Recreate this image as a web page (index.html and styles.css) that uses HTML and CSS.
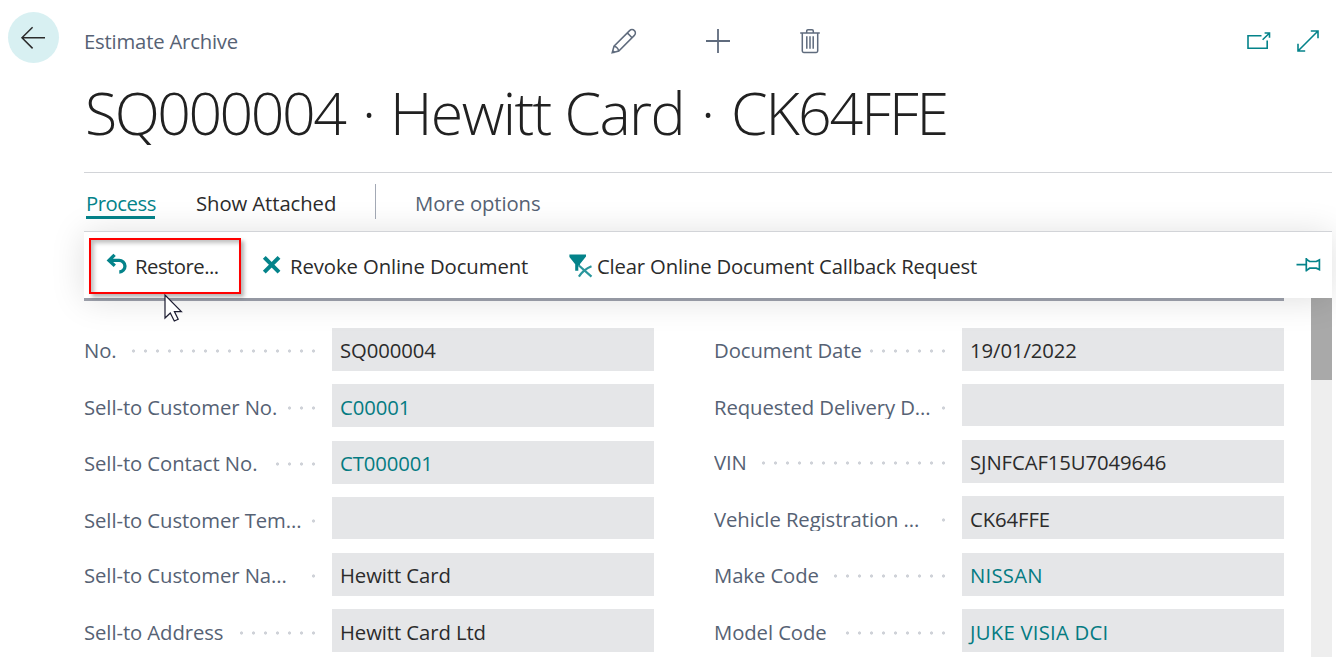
FILE: index.html
```
<!DOCTYPE html>
<html lang="en">
<head>
<meta charset="utf-8">
<title>Estimate Archive</title>
<link rel="stylesheet" href="styles.css">
</head>
<body>
<div class="page">
  <header class="topbar">
    <button class="back" aria-label="Back">
      <svg width="51" height="51" viewBox="0 0 51 51"><path d="M37 25.7H14M24.6 15.2 14 25.7 24.6 36.4" fill="none" stroke="#2b2b2b" stroke-width="1.5"/></svg>
    </button>
    <span class="crumb">Estimate Archive</span>
    <nav class="record-actions">
      <svg width="26" height="26" viewBox="0 0 26 26" fill="none" stroke="#5f6b7d" stroke-width="1.5"><path d="M1.2 24.8 3 18.2 18.6 2.6a3.3 3.3 0 0 1 4.8 4.8L7.8 23Z M3 18.2Q6.600 18.800 7.8 23 M16.3 4.9l4.8 4.8 M1.4 22.2l2.4 2.4"/></svg>
      <svg width="26" height="26" viewBox="0 0 26 26" fill="none" stroke="#5f6b7d" stroke-width="1.8"><path d="M13 1v24M1 13h24"/></svg>
      <svg width="22" height="26" viewBox="0 0 22 26" fill="none" stroke="#5f6b7d" stroke-width="1.5"><path d="M1.2 4.9h19.6M3.3 5v18a1.4 1.4 0 0 0 1.4 1.4h12.6a1.4 1.4 0 0 0 1.4-1.4V5M7.7 4.6V3a1.2 1.2 0 0 1 1.2-1.2h4.2A1.2 1.2 0 0 1 14.3 3v1.6M7.8 8.3v12.4M11 8.3v12.4M14.2 8.3v12.4"/></svg>
    </nav>
    <nav class="window-actions">
      <svg width="26" height="20" viewBox="0 0 26 20" fill="none" stroke="#04838a" stroke-width="1.6"><path d="M15.5 4.8H2v12.4h19.2V9.5M16.6 8.8l6.2-6M18.6 2h4.9v4.7"/></svg>
      <svg width="24" height="24" viewBox="0 0 24 24" fill="none" stroke="#04838a" stroke-width="1.6"><path d="M2 22 22 2M14.8 2H22v7.2M2 14.8V22h7.2"/></svg>
    </nav>
  </header>

  <h1 class="title"><span class="t-no">SQ000004</span><span class="t-dot">·</span><span class="t-name">Hewitt Card</span><span class="t-dot second">·</span><span class="t-reg">CK64FFE</span></h1>

  <nav class="tabs">
    <a class="tab active">Process</a>
    <a class="tab attached">Show Attached</a>
    <a class="tab more">More options</a>
  </nav>

  <div class="actions">
    <div class="action highlight">
      <svg width="24" height="24" viewBox="0 0 24 24"><path d="M9.6 1.8 4 7.4l5.8 5.4M4.5 7.4H14a5.800 5.800 0 0 1 .3 11.600" fill="none" stroke="#04838a" stroke-width="3.3"/></svg>
      <span>Restore...</span>
      <svg class="cursor" width="20" height="29" viewBox="0 0 20 29"><path d="M1 1v23l5.3-5 4 8 3.9-1.8-3.8-7.6h7Z" fill="#fff" stroke="#1b1b30" stroke-width="1.2"/></svg>
    </div>
    <div class="action revoke">
      <svg width="20" height="20" viewBox="0 0 20 20"><path d="M2.3 2.4 17 17.2M17 2.4 2.3 17.2" stroke="#04838a" stroke-width="4"/></svg>
      <span>Revoke Online Document</span>
    </div>
    <div class="action clear">
      <svg width="24" height="24" viewBox="0 0 24 24"><path d="M.4.6H17v2L11 10v1.7H9.3v5H6.2v-6.500L.4 2.900Z" fill="#04838a"/><path d="M9.600 11.200 22.500 22.600M22.500 12.300Q14.500 15.500 9.900 22.700" fill="none" stroke="#2a969c" stroke-width="2.200"/></svg>
      <span>Clear Online Document Callback Request</span>
    </div>
    <svg class="pin" width="26" height="18" viewBox="0 0 26 18"><path d="M.5 8.700H10M10.300 2v13.600M10.300 3.200 13.600 5.500H20.300L23.400 3.900V13.600L20.300 12.200H13.600L10.300 14.600" fill="none" stroke="#04838a" stroke-width="1.700"/></svg>
  </div>

  <main class="content">
    <section class="fields">
      <div class="col left">
        <div class="field"><label>No.</label><i style="--n:16"></i><output>SQ000004</output></div>
        <div class="field"><label>Sell-to Customer No.</label><i style="--n:3"></i><output class="link">C00001</output></div>
        <div class="field"><label>Sell-to Contact No.</label><i style="--n:4"></i><output class="link">CT000001</output></div>
        <div class="field"><label>Sell-to Customer Tem...</label><i style="--n:1"></i><output></output></div>
        <div class="field"><label>Sell-to Customer Na...</label><i style="--n:1"></i><output>Hewitt Card</output></div>
        <div class="field"><label>Sell-to Address</label><i style="--n:7"></i><output>Hewitt Card Ltd</output></div>
      </div>
      <div class="col right">
        <div class="field"><label>Document Date</label><i style="--n:7"></i><output>19/01/2022</output></div>
        <div class="field"><label>Requested Delivery D...</label><i style="--n:1"></i><output></output></div>
        <div class="field"><label>VIN</label><i style="--n:16"></i><output>SJNFCAF15U7049646</output></div>
        <div class="field"><label>Vehicle Registration ...</label><i style="--n:1"></i><output>CK64FFE</output></div>
        <div class="field"><label>Make Code</label><i style="--n:10"></i><output class="link wide">NISSAN</output></div>
        <div class="field"><label>Model Code</label><i style="--n:9"></i><output class="link wide">JUKE VISIA DCI</output></div>
      </div>
    </section>
    <div class="scrollbar"><div class="thumb"></div></div>
  </main>
</div>
</body>
</html>
```
FILE: styles.css
```
* { box-sizing: border-box; }

html, body { margin: 0; height: 100%; overflow: hidden; }

body {
  background: #fff;
  color: #2b2b2b;
  font: 400 20.3px/28px "Open Sans", "Noto Sans", sans-serif;
  letter-spacing: -0.08px;
}

svg { display: block; flex: none; }

.page {
  height: 657px;
  width: 1332px;
  display: flex;
  flex-direction: column;
}

.topbar {
  flex: none;
  height: 75px;
  padding: 12px 12px 0 8px;
  display: flex;
  align-items: flex-start;
}

.back {
  width: 51px;
  height: 51px;
  padding: 0;
  border: 0;
  border-radius: 50%;
  background: #d8f0f2;
}

.crumb {
  width: 527px;
  margin: 15px 0 0 25px;
  color: #566274;
  letter-spacing: -0.2px;
}

.record-actions { display: flex; gap: 68px; margin-top: 16px; }

.window-actions {
  display: flex;
  align-items: center;
  gap: 24px;
  margin: 17px 0 0 auto;
}

.title {
  flex: none;
  height: 98px;
  margin: 0 0 0 84px;
  display: flex;
  border-bottom: 1px solid #d2d4d8;
  color: #212121;
  font-size: 59px;
  font-weight: 300;
  line-height: 74px;
  white-space: nowrap;
}

.t-no { width: 278px; padding-left: 1px; letter-spacing: -2.5px; }
.t-dot { width: 28px; }
.t-name { width: 311px; letter-spacing: -1.6px; }
.t-dot.second { width: 29px; }
.t-reg { padding-left: 1px; letter-spacing: -2px; }

.tabs {
  flex: none;
  height: 59px;
  padding: 11px 0 0 86px;
  display: flex;
  align-items: flex-start;
}

.tab { line-height: 38px; height: 35px; white-space: nowrap; }
.active { width: 69px; color: #04838a; border-bottom: 3px solid #04838a; letter-spacing: -0.45px; }
.attached { width: 179px; margin-left: 41px; }
.more { padding-left: 39px; border-left: 1px solid #a3a9b5; color: #566274; letter-spacing: -0.1px; }

.actions {
  position: relative;
  z-index: 1;
  flex: none;
  height: 67px;
  margin: -1px 0 0 84px;
  padding-left: 5px;
  display: flex;
  align-items: flex-start;
  border-top: 1px solid #d2d4d8;
  background: #fff;
  box-shadow: 0 2px 34px rgba(0, 0, 0, .13);
}

.action { display: flex; white-space: nowrap; }

.highlight {
  position: relative;
  width: 152px;
  height: 56px;
  margin-top: 6px;
  padding: 12px 0 0 14px;
  gap: 6px;
  border: 2px solid #f00;
  box-shadow: 3px 3px 4px rgba(0, 0, 0, .3), inset 3px 3px 4px rgba(0, 0, 0, .25);
  letter-spacing: -0.5px;
}

.highlight > svg:first-child { margin-top: 1px; }
.cursor { position: absolute; left: 73px; top: 54px; }

.revoke { width: 264px; margin: 20px 0 0 21px; gap: 8px; }
.revoke svg { margin-top: 3px; }
.clear { margin: 20px 0 0 43px; gap: 4px; letter-spacing: -0.17px; }
.clear svg { margin-top: 2px; }
.pin { margin: 24px 10px 0 auto; }

.content {
  flex: 1;
  min-height: 0;
  margin-left: 84px;
  display: flex;
  justify-content: space-between;
}

.fields {
  width: 1200px;
  padding-top: 27px;
  display: flex;
  justify-content: space-between;
  border-top: 3px solid #9fa3ae;
}

.col { width: 570px; display: grid; align-content: start; }
.left { grid-template-rows: 56px 57px 56px 56px 56px 56px; }
.right { grid-template-rows: 56px 56px 56px 57px 56px 56px; }

.field { display: flex; align-items: flex-start; }

.field label {
  height: 27px;
  margin-top: 8px;
  overflow: hidden;
  color: #566274;
  white-space: nowrap;
}

.field i {
  width: calc(var(--n) * 12px);
  height: 12px;
  margin: 17px 13px 0 auto;
  background: radial-gradient(circle at 6.5px 6px, #cfd2d8 1.3px, transparent 1.9px) 0 0 / 12px 12px;
}

.field output {
  width: 322px;
  height: 43px;
  padding: 8px 8px 0;
  background: #e5e6e8;
  white-space: nowrap;
}

.field:nth-child(even) label { margin-top: 9px; height: 26px; }
.field:nth-child(even) output { padding-top: 9px; }
.field:nth-child(even) i { margin-top: 18px; }
.left .field:nth-child(4) output,
.right .field:nth-child(2) output { height: 42px; }
.field output.link { color: #047b82; }
.field output.wide { letter-spacing: 0.25px; }

.scrollbar { width: 21px; background: #eee; }
.thumb { height: 82px; background: #a9a9a9; }
```
